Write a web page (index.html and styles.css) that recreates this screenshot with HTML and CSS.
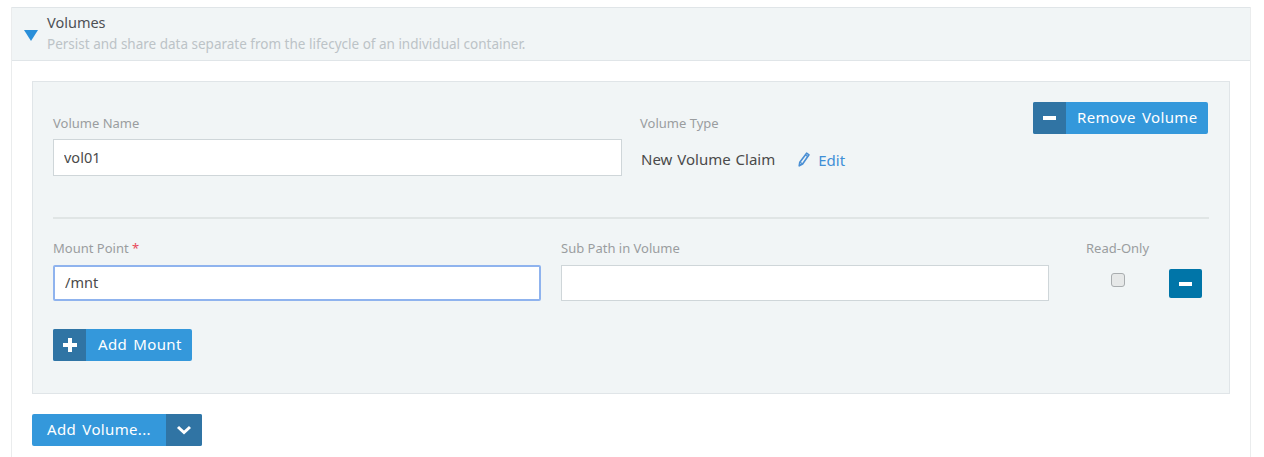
FILE: index.html
```html
<!DOCTYPE html>
<html lang="en">
<head>
    <meta charset="UTF-8">
    <title>Volumes</title>
    <link rel="stylesheet" href="styles.css">
</head>
<body>
    <section class="accordion">
        <header class="accordion-head">
            <span class="caret"></span>
            <div>
                <div class="accordion-title">Volumes</div>
                <div class="accordion-sub">Persist and share data separate from the lifecycle of an individual container.</div>
            </div>
        </header>
        <div class="accordion-body">
            <div class="volume-box">
                <div class="volume-row">
                    <div class="volume-name">
                        <label class="field-label">Volume Name</label>
                        <input class="field-input" type="text" value="vol01">
                    </div>
                    <div class="volume-type">
                        <label class="field-label">Volume Type</label>
                        <div class="type-value">
                            <span>New Volume Claim</span>
                            <a class="edit-link" href="#">
                                <svg class="pencil" width="12" height="15" viewBox="0 0 12 15">
                                    <path d="M8.6 1.2l2.4 1.6-6.4 9.2-3.4 1.8.6-3.6z" fill="none" stroke="#4a8fd4" stroke-width="1.6" stroke-linejoin="round"/>
                                    <path d="M2.2 10.3l2.4 1.7M7.4 3l2.4 1.6" stroke="#4a8fd4" stroke-width="1.2"/>
                                </svg>
                                Edit
                            </a>
                        </div>
                    </div>
                    <button class="btn btn-remove" type="button">
                        <span class="btn-icon"><span class="minus"></span></span>
                        <span class="btn-text">Remove Volume</span>
                    </button>
                </div>
                <hr class="divider">
                <div class="mount-row">
                    <div class="mount-col">
                        <label class="field-label">Mount Point <span class="req">*</span></label>
                        <input class="field-input is-focus" type="text" value="/mnt">
                    </div>
                    <div class="mount-col">
                        <label class="field-label">Sub Path in Volume</label>
                        <input class="field-input" type="text">
                    </div>
                    <div class="readonly-col">
                        <label class="field-label">Read-Only</label>
                        <input class="check" type="checkbox">
                    </div>
                    <button class="btn-small" type="button"><span class="minus"></span></button>
                </div>
                <button class="btn btn-mount" type="button">
                    <span class="btn-icon"><span class="plus"></span></span>
                    <span class="btn-text">Add Mount</span>
                </button>
            </div>
            <button class="btn btn-add" type="button">
                <span class="btn-text">Add Volume...</span>
                <span class="btn-icon">
                    <svg width="16" height="10" viewBox="0 0 16 10"><path d="M2 2l6 5.5L14 2" fill="none" stroke="#fff" stroke-width="3"/></svg>
                </span>
            </button>
        </div>
    </section>
</body>
</html>
```

FILE: styles.css
```css
html, body {
    height: 457px;
    overflow: hidden;
}
body {
    margin: 0;
    padding: 7px 13px 0 11px;
    font-family: "Noto Sans", Arial, sans-serif;
    font-size: 14px;
    color: #4a4a4a;
    background-color: #fff;
}
.accordion {
    border: 1px solid #eaeced;
    border-top: 0;
    height: 470px;
}
.accordion-head {
    display: flex;
    height: 54px;
    padding-left: 12px;
    gap: 9px;
    align-items: center;
    box-sizing: border-box;
    background-color: #f1f5f6;
    border: 1px solid #e0e5e8;
    border-width: 1px 0;
}
.caret {
    width: 0;
    height: 0;
    margin-top: 2px;
    border-left: 7px solid transparent;
    border-right: 7px solid transparent;
    border-top: 11px solid #2a8fd9;
}
.accordion-title {
    font-size: 14.5px;
    line-height: 22px;
    color: #4d5054;
    margin-top: -3px;
    margin-bottom: 1px;
}
.accordion-sub {
    font-size: 13.5px;
    line-height: 20px;
    color: #bcc3c7;
}
.accordion-body {
    padding: 20px 20px 0;
}
.volume-box {
    height: 313px;
    box-sizing: border-box;
    padding: 20px 20px 0;
    background-color: #f1f5f6;
    border: 1px solid #e0e5e8;
}
.volume-row {
    display: flex;
    height: 115px;
}
.volume-name {
    width: 569px;
    margin-right: 18px;
}
.volume-type {
    flex: 1;
}
.field-label {
    display: block;
    font-size: 13px;
    line-height: 18px;
    color: #9a9d9f;
    margin: 12px 0 7px;
}
.req {
    color: #e8495a;
}
.field-input {
    display: block;
    width: 100%;
    height: 37px;
    box-sizing: border-box;
    padding: 0 10px 1px;
    border: 1px solid #cfd6d9;
    background-color: #fff;
    font: inherit;
    font-size: 14.5px;
    color: #4a4a4a;
    outline: none;
}
.is-focus {
    border: 2px solid #8fb3ee;
    border-radius: 2px;
    padding: 0 10px 2px;
}
.type-value {
    display: flex;
    align-items: center;
    gap: 23px;
    height: 37px;
    padding: 1px 0 0 1px;
    font-size: 15px;
    word-spacing: 1px;
}
.edit-link {
    color: #3f8fd6;
    text-decoration: none;
    display: flex;
    align-items: center;
    gap: 8px;
    margin-top: 2px;
}
.divider {
    border: 0;
    border-top: 2px solid #e0e5e5;
    margin: 0;
    width: 1156px;
}
.mount-row {
    display: flex;
    height: 110px;
}
.mount-col {
    flex: none;
    width: 488px;
    margin-right: 20px;
}
.mount-col .field-label {
    margin-top: 20px;
    margin-bottom: 8px;
}
.mount-col .field-input {
    height: 36px;
}
.readonly-col {
    flex: none;
    width: 100px;
    padding-left: 17px;
    box-sizing: border-box;
}
.readonly-col .field-label {
    margin-top: 20px;
    margin-bottom: 16px;
    word-spacing: 1px;
}
.check {
    display: block;
    appearance: none;
    width: 14px;
    height: 14px;
    margin: 0 0 0 25px;
    border: 1px solid #a9adaf;
    border-radius: 3px;
    background-color: #e6e8e8;
}
.btn-small {
    flex: none;
    width: 33px;
    height: 29px;
    margin-top: 50px;
    padding: 0;
    display: flex;
    align-items: center;
    justify-content: center;
    border: 0;
    border-radius: 2px;
    background-color: #0075a8;
}
.btn {
    display: flex;
    align-items: stretch;
    height: 32px;
    padding: 0;
    border: 0;
    border-radius: 2px;
    overflow: hidden;
    background-color: #3498db;
    color: #fff;
    font-family: inherit;
    font-size: 15px;
    letter-spacing: 0.35px;
    word-spacing: 2px;
}
.btn-text {
    display: flex;
    align-items: center;
    white-space: pre;
    padding-bottom: 2px;
}
.btn-icon {
    display: flex;
    align-items: center;
    justify-content: center;
    background-color: #3074a4;
}
.btn-remove {
    width: 175px;
    flex: none;
    margin-right: 1px;
}
.btn-remove .btn-icon,
.btn-mount .btn-icon {
    width: 33px;
}
.btn-remove .btn-text {
    padding-left: 11px;
}
.btn-mount .btn-text {
    padding-left: 12px;
}
.btn-mount {
    width: 139px;
}
.btn-add {
    width: 170px;
    margin-top: 20px;
}
.btn-add .btn-text {
    width: 134px;
    padding-left: 15px;
    box-sizing: border-box;
}
.btn-add .btn-icon {
    width: 36px;
}
.minus {
    display: block;
    width: 13px;
    height: 4px;
    background-color: #fff;
}
.plus {
    display: block;
    width: 14px;
    height: 14px;
    background:
        linear-gradient(#fff, #fff) center / 14px 4px no-repeat,
        linear-gradient(#fff, #fff) center / 4px 14px no-repeat;
}
```
